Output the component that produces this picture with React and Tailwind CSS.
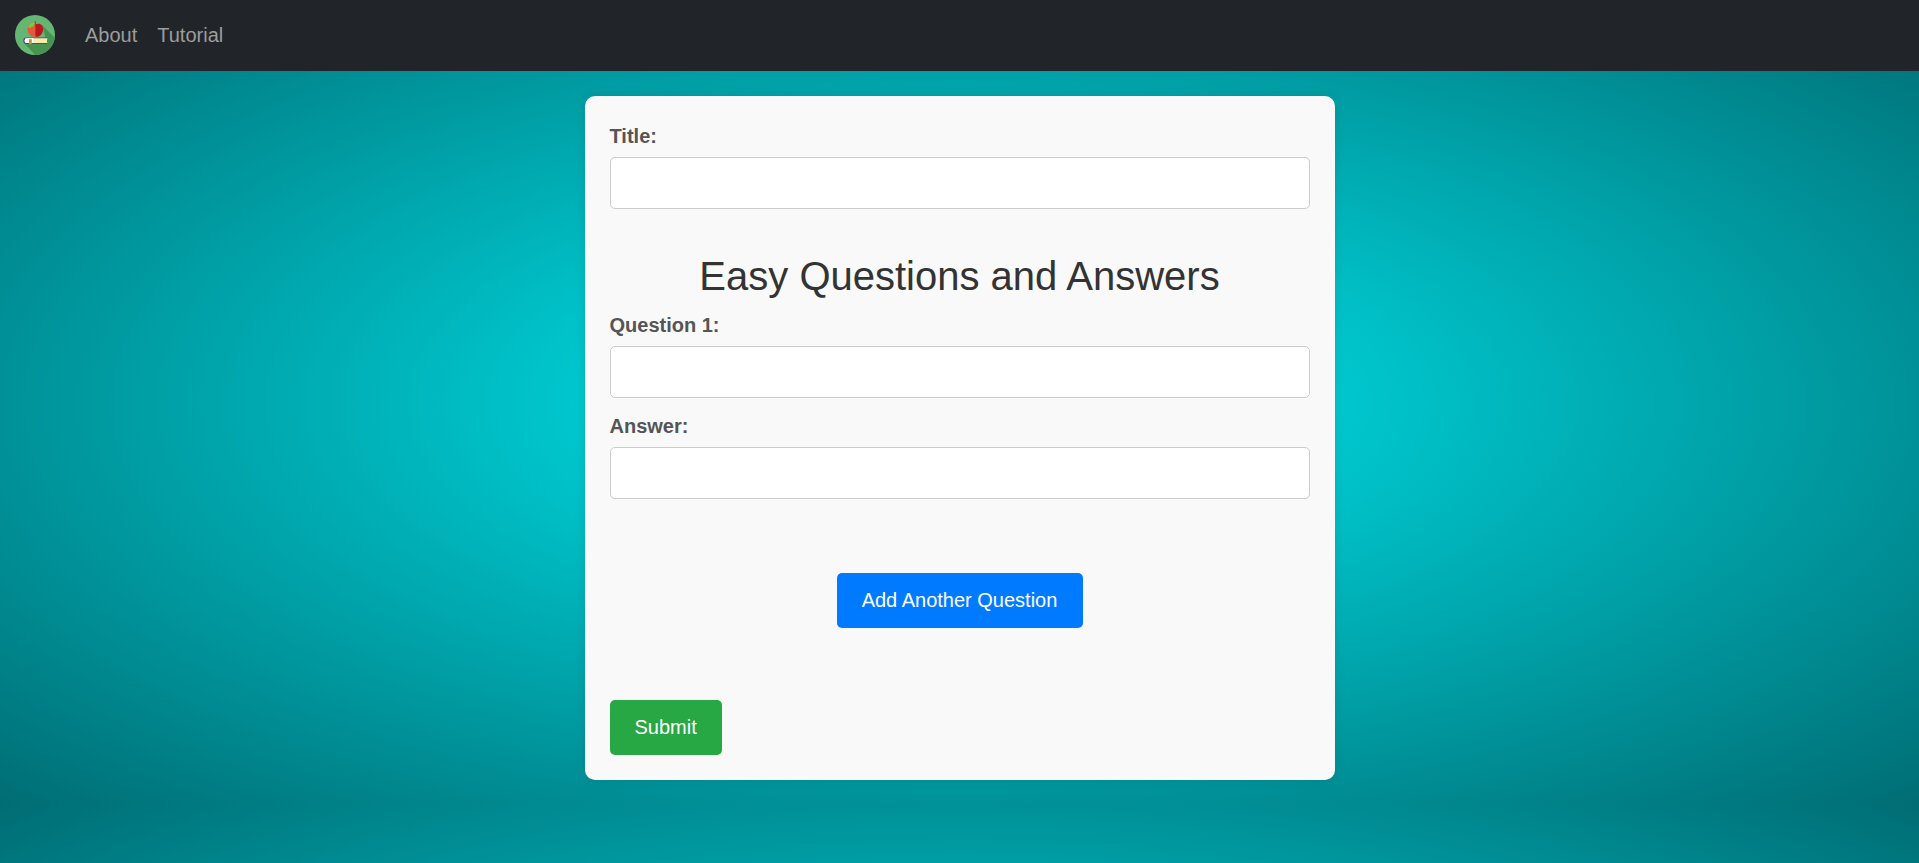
import React, { useState } from 'react';

function Logo() {
  return (
    <svg viewBox="0 0 40 40" className="h-10 w-10">
      <defs>
        <clipPath id="logoClip">
          <circle cx="20" cy="20" r="20" />
        </clipPath>
      </defs>
      <g clipPath="url(#logoClip)">
        <rect width="40" height="40" fill="#64b672" />
        <path d="M27 10 L44 27 V44 H24 L9 28 H32 Z" fill="#479352" />
        {/* book */}
        <path d="M32.3 22.5 H11.6 a3.3 3.3 0 0 0 0 6.6 H32.3 Z" fill="#2f54a0" />
        <path d="M32.5 23.3 H12 a2.2 2.2 0 0 0 0 4.8 H32.5 q-1 -2.4 0 -4.8 Z" fill="#f9eca6" />
        <path d="M18.5 23.3 H12 a2.2 2.2 0 0 0 0 4.8 H18.5 Z" fill="#ffffff" />
        <rect x="14" y="24.2" width="2.8" height="4.8" fill="#d88a2c" />
        {/* apple */}
        <path d="M20.3 9.4 C16 7.4 12.4 9.6 12.5 14.2 C12.6 18.4 16 22.6 20.3 21.6 Z" fill="#e2593b" />
        <path d="M20.3 9.4 C24.6 7.4 28.2 9.6 28.1 14.2 C28 18.4 24.6 22.6 20.3 21.6 Z" fill="#bd161c" />
        <path d="M20.3 10.5 V6.4" stroke="#6b4a2b" strokeWidth="1" />
        <path d="M19.8 8 C17 7 14 8.8 13 12.4 C16.4 13.4 19.4 11.6 19.8 8 Z" fill="#8cbf3f" />
      </g>
    </svg>
  );
}

function Field({ label, value, onChange }) {
  return (
    <div className="flex flex-col">
      <label className="mb-1.5 text-xl leading-[30px] font-bold text-[#555]">{label}</label>
      <input
        type="text"
        value={value}
        onChange={onChange}
        className="h-[52px] w-full rounded-[5px] border border-[#ccc] bg-white px-3 text-xl outline-none"
      />
    </div>
  );
}

function App() {
  const [title, setTitle] = useState('');
  const [items, setItems] = useState([{ question: '', answer: '' }]);

  const handleChange = (index, key, value) => {
    setItems(items.map((item, i) => (i === index ? { ...item, [key]: value } : item)));
  };

  const addQuestion = () => {
    setItems([...items, { question: '', answer: '' }]);
  };

  return (
    <div className="min-h-screen bg-[radial-gradient(ellipse_at_center,#00e9f0,#006d74)] bg-[length:100%_805px] font-['Liberation_Sans',Arial,sans-serif]">
      {/* Navbar */}
      <nav className="flex h-[71px] items-center bg-[#212529] px-[15px] pb-px">
        <a href="#" className="mr-5">
          <Logo />
        </a>
        <a href="#" className="px-2.5 text-xl text-[#9b9d9e]">
          About
        </a>
        <a href="#" className="px-2.5 text-xl text-[#9b9d9e]">
          Tutorial
        </a>
      </nav>

      {/* Form */}
      <form
        onSubmit={(e) => e.preventDefault()}
        className="mx-auto mt-[25px] flex w-[750px] flex-col rounded-[10px] bg-[#f9f9f9] p-[25px] shadow-[0_0_12px_rgba(0,0,0,0.1)]"
      >
        <Field label="Title:" value={title} onChange={(e) => setTitle(e.target.value)} />

        <h1 className="mt-[43px] mb-2.5 text-center text-[40px] leading-[48px] text-[#333]">
          Easy Questions and Answers
        </h1>

        {items.map((item, index) => (
          <div key={index} className="flex flex-col gap-[13px]">
            <Field
              label={`Question ${index + 1}:`}
              value={item.question}
              onChange={(e) => handleChange(index, 'question', e.target.value)}
            />
            <Field
              label="Answer:"
              value={item.answer}
              onChange={(e) => handleChange(index, 'answer', e.target.value)}
            />
          </div>
        ))}

        <button
          type="button"
          onClick={addQuestion}
          className="mt-[74px] h-[55px] w-[246px] cursor-pointer self-center rounded-[5px] bg-[#007bff] pb-px text-xl text-white"
        >
          Add Another Question
        </button>

        <button
          type="submit"
          className="mt-[72px] h-[55px] cursor-pointer self-start rounded-[5px] bg-[#28a745] px-[25px] pb-px text-xl text-white"
        >
          Submit
        </button>
      </form>
    </div>
  );
}

export default App;
